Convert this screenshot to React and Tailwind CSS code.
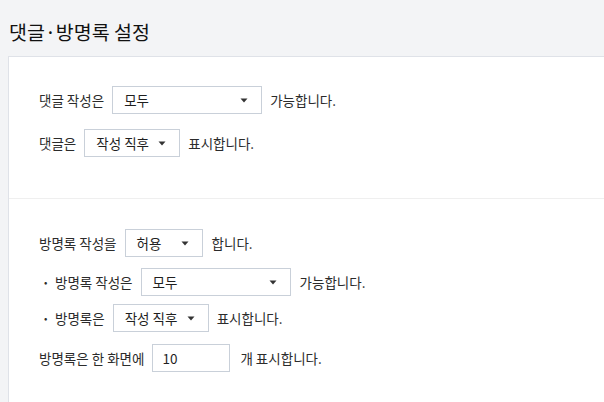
import React from "react";

const font = { fontFamily: '"Noto Sans CJK KR", "Noto Sans", sans-serif' };

function Caret() {
  return (
    <svg width="8" height="5" viewBox="0 0 8 5" className="shrink-0">
      <path d="M0.5 0.5 H7.5 L4 4.5 Z" fill="#333" />
    </svg>
  );
}

function Select({ value, w }) {
  return (
    <div
      className={`flex h-[28px] items-center justify-between border border-[#c9d0d9] bg-white pl-[11px] pr-[13px] text-[13.5px] text-[#1f1f1f] ${w}`}
    >
      <span>{value}</span>
      <Caret />
    </div>
  );
}

function Row({ children, bullet, className = "" }) {
  return (
    <div className={`flex items-center gap-2 text-[13.5px] text-[#2b2b2b] ${className}`}>
      {bullet && <span className="-ml-[13px] mr-[-2px] w-[5px] text-[10px] leading-none">•</span>}
      {children}
    </div>
  );
}

export default function App() {
  return (
    <div className="h-[402px] w-[604px] overflow-hidden bg-[#f3f4f6]" style={font}>
      <h1 className="pl-[9px] pt-[18px] text-[19.5px] leading-[28px] text-[#111]">댓글·방명록 설정</h1>
      <div className="ml-2 mt-[10px] border-l border-t border-[#dfe2e8] bg-white">
        <div className="border-b border-[#efefef] pb-[41px] pl-[30px] pt-[29px]">
          <Row>
            <span>댓글 작성은</span>
            <Select value="모두" w="w-[150px]" />
            <span>가능합니다.</span>
          </Row>
          <Row className="mt-[15px]">
            <span>댓글은</span>
            <Select value="작성 직후" w="w-[96px]" />
            <span>표시합니다.</span>
          </Row>
        </div>
        <div className="pb-[40px] pl-[30px] pt-[30px]">
          <Row>
            <span>방명록 작성을</span>
            <Select value="허용" w="w-[78px]" />
            <span className="ml-px">합니다.</span>
          </Row>
          <Row bullet className="mt-[11px] pl-[18px]">
            <span>방명록 작성은</span>
            <Select value="모두" w="w-[150px]" />
            <span className="ml-px">가능합니다.</span>
          </Row>
          <Row bullet className="mt-[8px] pl-[18px]">
            <span>방명록은</span>
            <Select value="작성 직후" w="w-[96px]" />
            <span>표시합니다.</span>
          </Row>
          <Row className="mt-[12px]">
            <span>방명록은 한 화면에</span>
            <div className="flex h-[28px] w-[78px] items-center border border-[#c9d0d9] bg-white pl-[9px] text-[13.5px] text-[#1f1f1f]">
              10
            </div>
            <span className="ml-0.5">개 표시합니다.</span>
          </Row>
        </div>
      </div>
    </div>
  );
}
